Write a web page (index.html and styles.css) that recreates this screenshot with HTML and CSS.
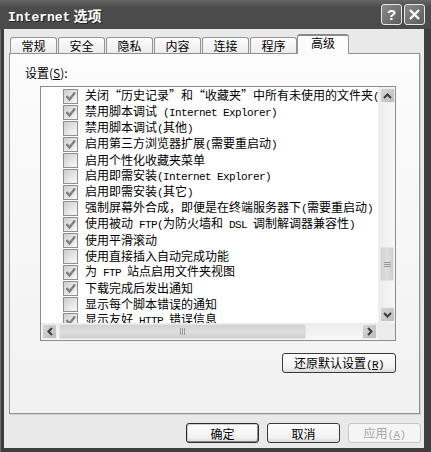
FILE: index.html
```html
<!DOCTYPE html>
<html lang="zh-CN">
<head>
    <meta charset="UTF-8">
    <title>Internet 选项</title>
    <link rel="stylesheet" href="styles.css">
</head>
<body>
    <div class="window">
        <div class="titlebar">
            <div class="title"><span class="en">Internet</span> 选项</div>
            <div class="title-buttons">
                <span class="tbtn help">?</span>
                <span class="tbtn">
                    <svg width="13" height="13" viewBox="0 0 13 13"><path d="M2 2 L11 11 M11 2 L2 11" stroke="#fff" stroke-width="2.4" fill="none"/></svg>
                </span>
            </div>
        </div>

        <div class="dialog">
            <div class="tabs">
                <div class="tab">常规</div>
                <div class="tab">安全</div>
                <div class="tab">隐私</div>
                <div class="tab">内容</div>
                <div class="tab">连接</div>
                <div class="tab">程序</div>
                <div class="tab active">高级</div>
            </div>

            <div class="panel">
                <div class="label">设置(<u>S</u>):</div>

                <div class="listbox">
                    <div class="rows">
                        <div class="row"><span class="cb on"></span><span class="txt">关闭“历史记录”和“收藏夹”中所有未使用的文件夹<span class="en">(</span>需要重启动<span class="en">)</span></span></div>
                        <div class="row"><span class="cb on"></span><span class="txt">禁用脚本调试<span class="en"> (Internet Explorer)</span></span></div>
                        <div class="row"><span class="cb"></span><span class="txt">禁用脚本调试<span class="en">(</span>其他<span class="en">)</span></span></div>
                        <div class="row"><span class="cb on"></span><span class="txt">启用第三方浏览器扩展<span class="en">(</span>需要重启动<span class="en">)</span></span></div>
                        <div class="row"><span class="cb"></span><span class="txt">启用个性化收藏夹菜单</span></div>
                        <div class="row"><span class="cb"></span><span class="txt">启用即需安装<span class="en">(Internet Explorer)</span></span></div>
                        <div class="row"><span class="cb on"></span><span class="txt">启用即需安装<span class="en">(</span>其它<span class="en">)</span></span></div>
                        <div class="row"><span class="cb"></span><span class="txt">强制屏幕外合成，即便是在终端服务器下<span class="en">(</span>需要重启动<span class="en">)</span></span></div>
                        <div class="row"><span class="cb on"></span><span class="txt">使用被动<span class="en"> FTP(</span>为防火墙和<span class="en"> DSL </span>调制解调器兼容性<span class="en">)</span></span></div>
                        <div class="row"><span class="cb on"></span><span class="txt">使用平滑滚动</span></div>
                        <div class="row"><span class="cb"></span><span class="txt">使用直接插入自动完成功能</span></div>
                        <div class="row"><span class="cb on"></span><span class="txt">为<span class="en"> FTP </span>站点启用文件夹视图</span></div>
                        <div class="row"><span class="cb on"></span><span class="txt">下载完成后发出通知</span></div>
                        <div class="row"><span class="cb"></span><span class="txt">显示每个脚本错误的通知</span></div>
                        <div class="row"><span class="cb on"></span><span class="txt">显示友好<span class="en"> HTTP </span>错误信息</span></div>
                    </div>

                    <div class="vbar">
                        <span class="sbtn">
                            <svg width="9" height="6" viewBox="0 0 9 6"><path d="M1 5 L4.5 1.5 L8 5" stroke="#3c3c3c" stroke-width="2" fill="none"/></svg>
                        </span>
                        <span class="vthumb">
                            <svg width="7" height="7" viewBox="0 0 7 7"><path d="M0 1.5 H7 M0 3.5 H7 M0 5.5 H7" stroke="#9a9a9a" stroke-width="1"/></svg>
                        </span>
                        <span class="sbtn">
                            <svg width="9" height="6" viewBox="0 0 9 6"><path d="M1 1 L4.5 4.5 L8 1" stroke="#3c3c3c" stroke-width="2" fill="none"/></svg>
                        </span>
                    </div>

                    <div class="hbar">
                        <span class="sbtn">
                            <svg width="6" height="9" viewBox="0 0 6 9"><path d="M5 1 L1.5 4.5 L5 8" stroke="#3c3c3c" stroke-width="2" fill="none"/></svg>
                        </span>
                        <span class="hthumb">
                            <svg width="7" height="7" viewBox="0 0 7 7"><path d="M1.5 0 V7 M3.5 0 V7 M5.5 0 V7" stroke="#9a9a9a" stroke-width="1"/></svg>
                        </span>
                        <span class="sbtn">
                            <svg width="6" height="9" viewBox="0 0 6 9"><path d="M1 1 L4.5 4.5 L1 8" stroke="#3c3c3c" stroke-width="2" fill="none"/></svg>
                        </span>
                    </div>

                    <div class="corner"></div>
                </div>

                <button class="btn reset">还原默认设置<span class="en">(<u>R</u>)</span></button>
            </div>

            <div class="footer">
                <button class="btn default">确定</button>
                <button class="btn">取消</button>
                <button class="btn disabled">应用<span class="en">(<u>A</u>)</span></button>
            </div>
        </div>
    </div>
</body>
</html>
```

FILE: styles.css
```css
body {
    margin: 0;
    font-family: "Noto Sans CJK SC", sans-serif;
    font-size: 12px;
    color: #000;
    background: #fff;
}
.en {
    font-family: "Liberation Mono", monospace;
    font-size: 11px;
    letter-spacing: -0.6px;
}
.window {
    width: 431px;
    height: 452px;
    display: flex;
    flex-direction: column;
    background: #3e3e3e;
    box-shadow: inset 1px 0 0 #6a6a6a;
}
.titlebar {
    height: 29px;
    display: flex;
    align-items: center;
    padding: 0 6px 0 8px;
    background: linear-gradient(#666, #4c4c4c 25%, #4a4a4a);
}
.title {
    flex: 1;
    color: #fff;
    font-weight: bold;
    font-size: 14px;
    text-shadow: 1px 1px 0 #222;
}
.title .en {
    font-size: 13px;
    font-weight: bold;
    letter-spacing: 0;
}
.title-buttons {
    display: flex;
    gap: 2px;
}
.tbtn {
    width: 21px;
    height: 21px;
    box-sizing: border-box;
    border: 1px solid #e8e8e8;
    border-radius: 3px;
    background: linear-gradient(135deg, #8a8a8a, #5c5c5c);
    display: flex;
    align-items: center;
    justify-content: center;
    color: #fff;
}
.tbtn.help {
    font: bold 15px "Liberation Sans", sans-serif;
}
.dialog {
    flex: 1;
    margin: 0 7px 4px 4px;
    background: #e9e9e9;
    display: flex;
    flex-direction: column;
}
.tabs {
    display: flex;
    height: 19px;
    margin-top: 5px;
    padding-left: 6px;
    position: relative;
    z-index: 1;
}
.tab {
    width: 47px;
    height: 16px;
    margin-top: 3px;
    margin-right: 1px;
    box-sizing: border-box;
    border: 1px solid #949494;
    border-bottom: none;
    border-radius: 3px 3px 0 0;
    background: linear-gradient(#fdfdfd, #ececec);
    text-align: center;
    line-height: 15px;
}
.tab.active {
    width: 52px;
    height: 20px;
    margin-top: 0;
    margin-left: -1px;
    border-top: 2px solid #8a8a8a;
    background: #fcfcfc;
    line-height: 14px;
}
.panel {
    height: 361px;
    box-sizing: border-box;
    margin: 0 4px 0 5px;
    border: 1px solid #919191;
    background: linear-gradient(#fcfcfc, #f1f1f1);
    box-shadow: 1px 1px 0 #cfcfcf;
    display: flex;
    flex-direction: column;
}
.label {
    margin: 11px 0 0 15px;
    line-height: 16px;
}
.listbox {
    margin: 5px 0 0 30px;
    width: 356px;
    height: 255px;
    box-sizing: border-box;
    border: 1px solid #8c8c8c;
    background: #fff;
    display: grid;
    grid-template-columns: 337px 17px;
    grid-template-rows: 236px 17px;
}
.rows {
    overflow: hidden;
    padding: 1px 0 0 22px;
}
.row {
    display: flex;
    align-items: center;
    height: 16px;
    white-space: nowrap;
    line-height: 16px;
}
.txt {
    white-space: pre;
}
.cb {
    flex: none;
    width: 15px;
    height: 15px;
    margin-right: 7px;
    box-sizing: border-box;
    border: 1px solid #8e8e8e;
    background: linear-gradient(135deg, #cdcdcd, #e8e8e8 60%, #f7f7f7);
}
.cb.on {
    background:
        url("data:image/svg+xml,%3Csvg xmlns='http://www.w3.org/2000/svg' width='13' height='13'%3E%3Cpath d='M2.5 6 L5.5 9.5 L11 2.5' stroke='%23808080' stroke-width='2.4' fill='none'/%3E%3C/svg%3E") center no-repeat,
        linear-gradient(135deg, #cdcdcd, #e8e8e8 60%, #f7f7f7);
}
.vbar {
    display: flex;
    flex-direction: column;
    background: linear-gradient(90deg, #ececec, #f8f8f8);
    border-left: 1px solid #f0f0f0;
}
.hbar {
    display: flex;
    background: linear-gradient(#ececec, #f8f8f8);
}
.sbtn {
    flex: none;
    width: 15px;
    height: 15px;
    margin: 1px;
    box-sizing: border-box;
    border: 1px solid #ededed;
    border-radius: 2px;
    background: linear-gradient(135deg, #d6d6d6, #bdbdbd);
    display: flex;
    align-items: center;
    justify-content: center;
}
.vbar .sbtn:first-child {
    margin-bottom: 144px;
}
.vbar .sbtn:last-child {
    margin-top: auto;
}
.vthumb {
    height: 34px;
    margin: 0 1px;
    box-sizing: border-box;
    border: 1px solid #e4e4e4;
    border-radius: 2px;
    background: linear-gradient(90deg, #d2d2d2, #dedede 50%, #cfcfcf);
    display: flex;
    align-items: center;
    justify-content: center;
}
.hthumb {
    width: 247px;
    height: 15px;
    margin: 1px 0 0 1px;
    box-sizing: border-box;
    border: 1px solid #e4e4e4;
    border-radius: 2px;
    background: linear-gradient(#d2d2d2, #dedede 50%, #cfcfcf);
    display: flex;
    align-items: center;
    justify-content: center;
}
.hbar .sbtn:last-child {
    margin-left: auto;
}
.corner {
    background: #ececec;
}
.btn {
    height: 20px;
    padding: 0;
    box-sizing: border-box;
    border: 1px solid #3a3a3a;
    border-radius: 3px;
    background: linear-gradient(#fefefe, #f2f2f2 75%, #d9d9d9);
    font-family: "Noto Sans CJK SC", sans-serif;
    font-size: 12px;
    line-height: 17px;
    color: #000;
}
.reset {
    width: 114px;
    margin: 12px 23px 0 auto;
}
.footer {
    display: flex;
    justify-content: flex-end;
    gap: 8px;
    margin-top: 9px;
    padding-right: 3px;
}
.footer .btn {
    width: 73px;
}
.btn.default {
    border-color: #2a2a2a;
    box-shadow: inset -1px -1px 0 #8c8c8c, inset 1px 1px 0 #cfcfcf;
}
.btn.disabled {
    border-color: #c6c6c6;
    background: #f5f5f5;
    color: #a6a6a6;
}
```
